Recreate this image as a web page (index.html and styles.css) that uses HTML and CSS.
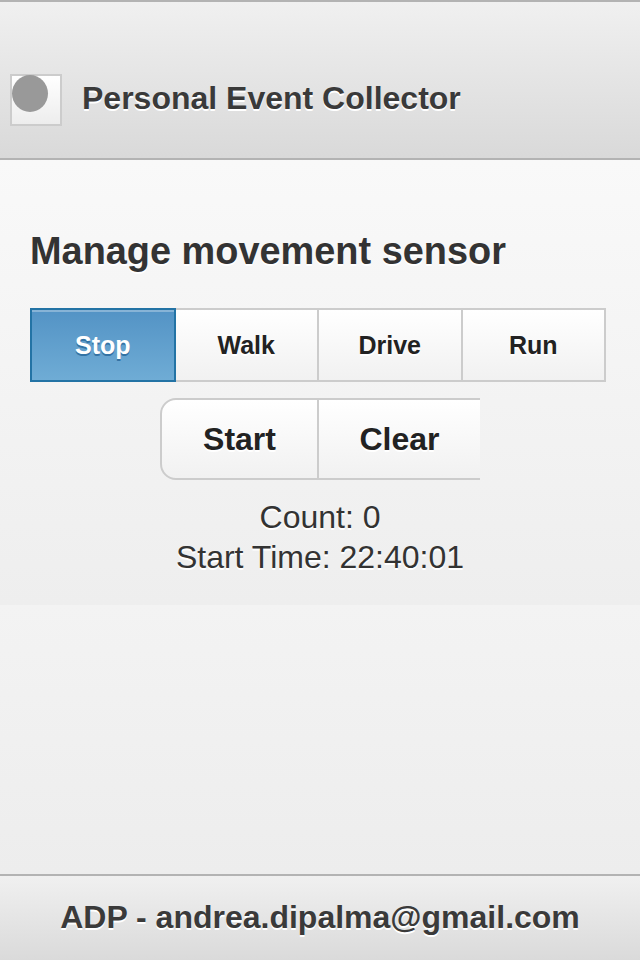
FILE: index.html
```html
<!DOCTYPE html>
<html lang="en">
<head>
<meta charset="utf-8">
<title>Personal Event Collector</title>
<link rel="stylesheet" href="styles.css">
</head>
<body>
<div class="page">
  <header class="header">
    <div class="icon-box"><span class="icon-dot"></span></div>
    <h1 class="title">Personal Event Collector</h1>
  </header>
  <main class="content">
    <h3 class="heading">Manage movement sensor</h3>
    <div class="segmented">
      <span class="seg seg-active">Stop</span>
      <span class="seg">Walk</span>
      <span class="seg">Drive</span>
      <span class="seg">Run</span>
    </div>
    <div class="actions-row">
      <div class="actions">
        <span class="act act-start">Start</span>
        <span class="act act-clear">Clear</span>
      </div>
    </div>
    <div class="stats">
      <div class="stat">Count: 0</div>
      <div class="stat">Start Time: 22:40:01</div>
    </div>
  </main>
  <div class="filler"></div>
  <footer class="footer">ADP - andrea.dipalma@gmail.com</footer>
</div>
</body>
</html>
```
FILE: styles.css
```css
html, body {
  margin: 0;
  padding: 0;
}
body {
  font-family: "Liberation Sans", Arial, Helvetica, sans-serif;
  background: #eeeeee;
  color: #333;
}
.page {
  display: flex;
  flex-direction: column;
  min-height: 960px;
}
.header {
  box-sizing: border-box;
  height: 160px;
  border-top: 2px solid #b3b3b3;
  border-bottom: 2px solid #b3b3b3;
  background: linear-gradient(#f0f0f0, #d9d9d9);
  display: flex;
  align-items: flex-start;
  padding: 72px 0 0 10px;
}
.icon-box {
  box-sizing: border-box;
  width: 52px;
  height: 52px;
  border: 2px solid #cccccc;
  background: linear-gradient(#ffffff, #ededed);
  display: flex;
  align-items: flex-start;
}
.icon-dot {
  display: block;
  width: 36px;
  height: 37px;
  margin-top: -1px;
  border-radius: 50%;
  background: #999999;
}
.title {
  margin: 4px 0 0 20px;
  font-size: 32px;
  line-height: 40px;
  font-weight: bold;
  color: #3a3a3a;
  text-shadow: 0 2px 0 #ffffff;
}
.content {
  background: linear-gradient(#f9f9f9, #eeeeee);
  padding: 69px 30px 28px 30px;
}
.heading {
  margin: 0;
  font-size: 37.9px;
  line-height: 44px;
  font-weight: bold;
  color: #333;
  text-shadow: 0 2px 0 #ffffff;
}
.segmented {
  display: flex;
  width: 576px;
  margin-top: 35px;
}
.seg {
  flex: 1;
  box-sizing: border-box;
  height: 74px;
  margin-left: -2px;
  border: 2px solid #cccccc;
  background: linear-gradient(#ffffff, #f1f1f1);
  text-align: center;
  font-size: 25px;
  line-height: 70px;
  font-weight: bold;
  color: #222;
  text-shadow: 0 2px 0 #ffffff;
}
.seg:first-child {
  margin-left: 0;
}
.seg-active {
  position: relative;
  z-index: 1;
  border-color: #2373a5;
  background: linear-gradient(#5393c5, #6facd5);
  box-shadow: inset 0 2px 0 rgba(255, 255, 255, 0.3);
  color: #ffffff;
  text-shadow: 0 2px 0 #3373a5;
}
.actions-row {
  display: flex;
  justify-content: center;
  margin-top: 16px;
}
.actions {
  display: flex;
  height: 82px;
}
.act {
  box-sizing: border-box;
  height: 82px;
  border-top: 2px solid #cccccc;
  border-bottom: 2px solid #cccccc;
  background: linear-gradient(#ffffff, #f1f1f1);
  text-align: center;
  font-size: 32px;
  line-height: 78px;
  font-weight: bold;
  color: #222;
  text-shadow: 0 2px 0 #ffffff;
}
.act-start {
  width: 159px;
  border-left: 2px solid #cccccc;
  border-right: 2px solid #cccccc;
  border-radius: 16px 0 0 16px;
}
.act-clear {
  width: 161px;
}
.stats {
  margin-top: 17px;
  text-align: center;
}
.stat {
  font-size: 32px;
  line-height: 40px;
  color: #333;
  text-shadow: 0 2px 0 #ffffff;
}
.filler {
  flex: 1;
  background: linear-gradient(#f3f3f3, #ededed);
}
.footer {
  box-sizing: border-box;
  height: 86px;
  border-top: 2px solid #b3b3b3;
  background: linear-gradient(#f0f0f0, #dadada);
  text-align: center;
  font-size: 32px;
  line-height: 82px;
  font-weight: bold;
  color: #3a3a3a;
  text-shadow: 0 2px 0 #ffffff;
}
```
